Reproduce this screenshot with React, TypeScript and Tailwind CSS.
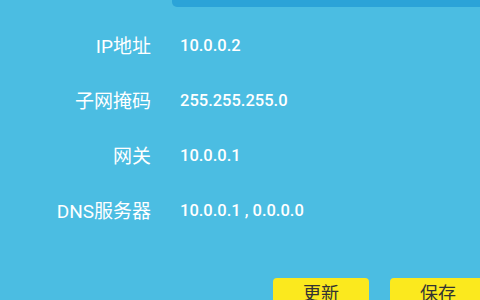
import React from 'react';

const rows = [
  { label: 'IP地址', value: '10.0.0.2' },
  { label: '子网掩码', value: '255.255.255.0' },
  { label: '网关', value: '10.0.0.1' },
  { label: 'DNS服务器', value: '10.0.0.1 , 0.0.0.0' },
];

export default function App() {
  return (
    <div
      className="w-[480px] h-[300px] overflow-hidden bg-[#4bbde2] flex flex-col"
      style={{ fontFamily: "Roboto, 'Noto Sans CJK SC', sans-serif" }}
    >
      {/* top tab strip */}
      <div className="flex h-[7px] shrink-0">
        <div className="w-[172px]" />
        <div className="flex-1 bg-[#2ba3d8] rounded-bl-[5px]" />
      </div>

      <div className="mt-[12px] flex flex-col">
        {rows.map((r) => (
          <div key={r.label} className="h-[55px] flex items-center">
            <div className="w-[151px] text-right text-white text-[19px] leading-none">
              {r.label}
            </div>
            <div className="ml-[29px] text-white text-[16.5px] font-medium leading-none">
              {r.value}
            </div>
          </div>
        ))}
      </div>

      <div className="mt-[39px] flex gap-[21px] pl-[273px] shrink-0">
        <button className="w-[96px] h-[40px] shrink-0 bg-[#fbe91e] rounded-[4px] text-[#333] text-[18px] pt-[2px] flex justify-center items-start">
          更新
        </button>
        <button className="w-[96px] h-[40px] shrink-0 bg-[#fbe91e] rounded-[4px] text-[#333] text-[18px] pt-[2px] flex justify-center items-start">
          保存
        </button>
      </div>
    </div>
  );
}
